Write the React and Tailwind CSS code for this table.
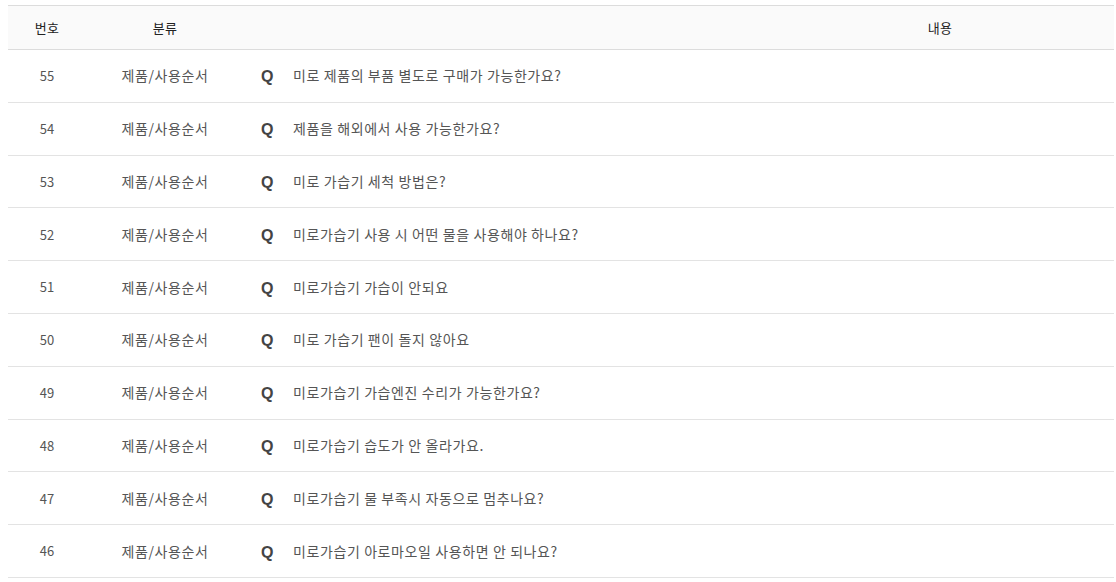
import React from "react";

const faqs = [
  { no: 55, category: "제품/사용순서", question: "미로 제품의 부품 별도로 구매가 가능한가요?" },
  { no: 54, category: "제품/사용순서", question: "제품을 해외에서 사용 가능한가요?" },
  { no: 53, category: "제품/사용순서", question: "미로 가습기 세척 방법은?" },
  { no: 52, category: "제품/사용순서", question: "미로가습기 사용 시 어떤 물을 사용해야 하나요?" },
  { no: 51, category: "제품/사용순서", question: "미로가습기 가습이 안되요" },
  { no: 50, category: "제품/사용순서", question: "미로 가습기 팬이 돌지 않아요" },
  { no: 49, category: "제품/사용순서", question: "미로가습기 가습엔진 수리가 가능한가요?" },
  { no: 48, category: "제품/사용순서", question: "미로가습기 습도가 안 올라가요." },
  { no: 47, category: "제품/사용순서", question: "미로가습기 물 부족시 자동으로 멈추나요?" },
  { no: 46, category: "제품/사용순서", question: "미로가습기 아로마오일 사용하면 안 되나요?" },
];

const FaqRow = ({ no, category, question }) => (
  <div className="grid h-[52.8px] grid-cols-[78px_158px_1fr] items-center border-b border-[#e3e3e3] text-[14px] tracking-[0.6px] text-[#555]">
    <div className="text-center text-[13px] tracking-normal">{no}</div>
    <div className="text-center">{category}</div>
    <div className="flex items-center pl-[17px]">
      <span className="mt-[3px] w-[13px] font-['Liberation_Sans',Arial,sans-serif] text-[16px] font-bold leading-none tracking-normal text-[#444]">
        Q
      </span>
      <span className="ml-[19px]">{question}</span>
    </div>
  </div>
);

export default function App() {
  return (
    <div className="min-h-[582px] bg-white px-2 pt-[5px] font-['Noto_Sans_CJK_KR','Noto_Sans',sans-serif]">
      <div className="w-[1106px]">
        <div className="grid h-[45px] grid-cols-[78px_158px_1fr_348px] items-center border-y border-[#dcdcdc] bg-[#fafafa] text-[13px] tracking-[0.4px] text-[#222]">
          <div className="text-center">번호</div>
          <div className="text-center">분류</div>
          <div />
          <div className="text-center">내용</div>
        </div>
        {faqs.map((faq) => (
          <FaqRow key={faq.no} {...faq} />
        ))}
      </div>
    </div>
  );
}
